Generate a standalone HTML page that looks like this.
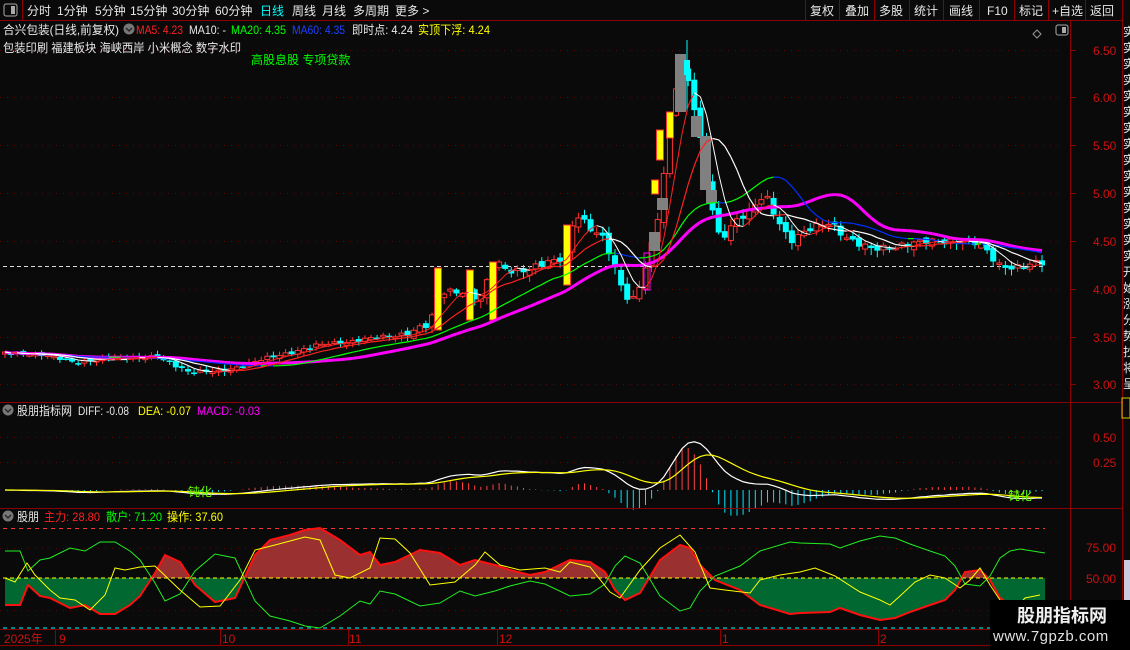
<!DOCTYPE html>
<html><head><meta charset="utf-8"><style>
html,body{margin:0;padding:0;background:#0a0a0a;width:1130px;height:650px;overflow:hidden;font-family:"Liberation Sans","Noto Sans CJK SC",sans-serif;}
svg text{font-family:"Liberation Sans","Noto Sans CJK SC",sans-serif;}
</style></head><body>
<svg id="s" width="1130" height="650" xmlns="http://www.w3.org/2000/svg">
<rect width="1130" height="650" fill="#0a0a0a"/>
<g id="grid"></g>
<g id="ind"></g>
<g id="macd"></g>
<g id="candles"></g>
<g id="ma"></g>
<line x1="0" y1="20.5" x2="1122" y2="20.5" stroke="#8b0000"/>
<line x1="0" y1="402.5" x2="1122" y2="402.5" stroke="#8b0000"/>
<line x1="0" y1="508.5" x2="1122" y2="508.5" stroke="#8b0000"/>
<line x1="0" y1="629.5" x2="1122" y2="629.5" stroke="#8b0000"/>
<line x1="0" y1="645.5" x2="1122" y2="645.5" stroke="#8b0000"/>
<line x1="1070.5" y1="20" x2="1070.5" y2="630" stroke="#8b0000"/>
<line x1="1122.5" y1="0" x2="1122.5" y2="650" stroke="#8b0000"/>
<line x1="22.5" y1="0" x2="22.5" y2="20" stroke="#8b0000"/>
<rect x="4" y="4" width="13" height="12" rx="2" fill="none" stroke="#aaa"/><rect x="11" y="6" width="4" height="8" fill="#aaa"/>
<g font-size="12" fill="#e8e8e8">
<text x="27" y="15">分时</text><text x="57" y="15">1分钟</text><text x="95" y="15">5分钟</text><text x="130" y="15">15分钟</text><text x="172" y="15">30分钟</text><text x="215" y="15">60分钟</text><text x="260" y="15" fill="#00ffff">日线</text><text x="292" y="15">周线</text><text x="322" y="15">月线</text><text x="353" y="15">多周期</text><text x="395" y="15">更多 &gt;</text>
<text x="810" y="15">复权</text><text x="845" y="15">叠加</text><text x="879" y="15">多股</text><text x="914" y="15">统计</text><text x="949" y="15">画线</text><text x="987" y="15">F10</text><text x="1019" y="15">标记</text><text x="1052" y="15">+自选</text><text x="1090" y="15">返回</text>
</g>
<g stroke="#8b0000"><line x1="805.5" y1="0" x2="805.5" y2="20"/><line x1="839.5" y1="0" x2="839.5" y2="20"/><line x1="874.5" y1="0" x2="874.5" y2="20"/><line x1="909.5" y1="0" x2="909.5" y2="20"/><line x1="943.5" y1="0" x2="943.5" y2="20"/><line x1="979.5" y1="0" x2="979.5" y2="20"/><line x1="1014.5" y1="0" x2="1014.5" y2="20"/><line x1="1048.5" y1="0" x2="1048.5" y2="20"/><line x1="1085.5" y1="0" x2="1085.5" y2="20"/></g>
<g font-size="12">
<text x="3" y="34" fill="#e8e8e8" textLength="116" lengthAdjust="spacingAndGlyphs">合兴包装(日线,前复权)</text>
<circle cx="129" cy="29" r="5.5" fill="#777"/><path d="M126 28l3 3 3-3" stroke="#222" fill="none" stroke-width="1.3"/>
<text x="136" y="34" fill="#ff2020" textLength="47" lengthAdjust="spacingAndGlyphs">MA5: 4.23</text>
<text x="189" y="34" fill="#e8e8e8" textLength="37" lengthAdjust="spacingAndGlyphs">MA10: -</text>
<text x="231" y="34" fill="#00ff00" textLength="55" lengthAdjust="spacingAndGlyphs">MA20: 4.35</text>
<text x="292" y="34" fill="#2040ff" textLength="53" lengthAdjust="spacingAndGlyphs">MA60: 4.35</text>
<text x="352" y="34" fill="#e8e8e8" textLength="61" lengthAdjust="spacingAndGlyphs">即时点: 4.24</text>
<text x="418" y="34" fill="#ffff00" textLength="72" lengthAdjust="spacingAndGlyphs">实顶下浮: 4.24</text>
<text x="3" y="52" fill="#e8e8e8" textLength="238" lengthAdjust="spacingAndGlyphs">包装印刷 福建板块 海峡西岸 小米概念 数字水印</text>
<text x="251" y="64" fill="#00ff00">高股息股 专项贷款</text>
<path d="M1037 30l-4 4 4 4 4-4z" fill="none" stroke="#999"/>
<rect x="1056" y="25" width="12" height="10" rx="2" fill="none" stroke="#aaa"/><rect x="1062" y="27" width="4" height="6" fill="#aaa"/>
</g>
<g font-size="12" fill="#cc1010">
<text x="1093" y="55">6.50</text><text x="1093" y="102">6.00</text><text x="1093" y="150">5.50</text><text x="1093" y="198">5.00</text><text x="1093" y="246">4.50</text><text x="1093" y="294">4.00</text><text x="1093" y="342">3.50</text><text x="1093" y="389">3.00</text>
<text x="1093" y="442">0.50</text><text x="1093" y="467">0.25</text>
<text x="1086" y="552">75.00</text><text x="1086" y="583">50.00</text>
</g>
<g font-size="12">
<circle cx="8" cy="410" r="5.5" fill="#777"/><path d="M5 409l3 3 3-3" stroke="#222" fill="none" stroke-width="1.3"/>
<text x="17" y="415" fill="#e8e8e8" textLength="55" lengthAdjust="spacingAndGlyphs">股朋指标网</text><text x="78" y="415" fill="#e8e8e8" textLength="51" lengthAdjust="spacingAndGlyphs">DIFF: -0.08</text><text x="138" y="415" fill="#ffff00" textLength="53" lengthAdjust="spacingAndGlyphs">DEA: -0.07</text><text x="197" y="415" fill="#ff00ff" textLength="63" lengthAdjust="spacingAndGlyphs">MACD: -0.03</text>
<circle cx="8" cy="516" r="5.5" fill="#777"/><path d="M5 515l3 3 3-3" stroke="#222" fill="none" stroke-width="1.3"/>
<text x="17" y="521" fill="#e8e8e8" textLength="22" lengthAdjust="spacingAndGlyphs">股朋</text><text x="44" y="521" fill="#ff2020" textLength="56" lengthAdjust="spacingAndGlyphs">主力: 28.80</text><text x="106" y="521" fill="#00ff00" textLength="56" lengthAdjust="spacingAndGlyphs">散户: 71.20</text><text x="167" y="521" fill="#ffff00" textLength="56" lengthAdjust="spacingAndGlyphs">操作: 37.60</text>
<text x="4" y="643" fill="#cc1010">2025年</text>
<g fill="#cc1010"><text x="59" y="643">9</text><text x="222" y="643">10</text><text x="349" y="643">11</text><text x="499" y="643">12</text><text x="722" y="643">1</text><text x="880" y="643">2</text></g>
</g>
<g stroke="#8b0000"><line x1="55.5" y1="630" x2="55.5" y2="645"/><line x1="220.5" y1="630" x2="220.5" y2="645"/><line x1="348.5" y1="630" x2="348.5" y2="645"/><line x1="497.5" y1="630" x2="497.5" y2="645"/><line x1="720.5" y1="630" x2="720.5" y2="645"/><line x1="878.5" y1="630" x2="878.5" y2="645"/></g>
<g id="rs" font-size="12" fill="#e8e8e8"></g>
<rect x="1122" y="398" width="8" height="20" fill="none" stroke="#cc0" /><rect x="1124" y="560" width="6" height="70" fill="#ccd"/>
<rect x="990" y="600" width="140" height="50" fill="#000"/>
<text x="1017" y="622" font-size="18" font-weight="bold" fill="#f0f0f0">股朋指标网</text>
<text x="993" y="641" font-size="15" fill="#e0e0e0" letter-spacing="0.5">www.7gpzb.com</text>
</svg>
<script>
(function(){
var NS="http://www.w3.org/2000/svg";
function el(p,t,a){var e=document.createElementNS(NS,t);for(var k in a)e.setAttribute(k,a[k]);p.appendChild(e);return e;}
var g=document.getElementById('grid');
[50,97,145,193,241,289,337,384].forEach(function(y){el(g,'line',{x1:0,y1:y+.5,x2:1064,y2:y+.5,stroke:'#6a0000','stroke-dasharray':'1 6'});el(g,'line',{x1:1070,y1:y+.5,x2:1076,y2:y+.5,stroke:'#8b0000'});});
[437,462].forEach(function(y){el(g,'line',{x1:0,y1:y+.5,x2:1064,y2:y+.5,stroke:'#6a0000','stroke-dasharray':'1 6'});});
[548,610].forEach(function(y){el(g,'line',{x1:0,y1:y+.5,x2:1045,y2:y+.5,stroke:'#6a0000','stroke-dasharray':'1 6'});});
el(g,'line',{x1:3,y1:266.5,x2:1045,y2:266.5,stroke:'#ddd','stroke-dasharray':'4 3'});
el(g,'line',{x1:3,y1:528.5,x2:1045,y2:528.5,stroke:'#ff3030','stroke-dasharray':'4 4'});
el(g,'line',{x1:3,y1:628,x2:1045,y2:628,stroke:'#00ffff','stroke-dasharray':'4 4'});
var rs=document.getElementById('rs');var chs="实实实实实实实实实实实实实实实开始涨分势抄将呈";
for(var i=0;i<23;i++){var tt=el(rs,'text',{x:1123,y:36+i*16});tt.textContent=chs[i];}
function interp(pts,x){for(var i=1;i<pts.length;i++){if(x<=pts[i][0]){var a=pts[i-1],b=pts[i];return a[1]+(b[1]-a[1])*(x-a[0])/(b[0]-a[0]);}}return pts[pts.length-1][1];}
var CP=[[5,352],[40,355],[80,362],[120,357],[160,358],[190,372],[220,372],[240,366],[280,355],[320,345],[360,340],[400,335],[430,325],[440,292],[460,290],[480,300],[495,262],[510,270],[530,270],[550,262],[565,256],[575,212],[590,230],[605,240],[615,268],[625,295],[635,300],[645,270],[655,235],[662,190],[670,118],[680,62],[690,85],[700,140],[710,200],[720,240],[735,220],[750,212],[765,195],[775,215],[790,240],[810,230],[830,222],[850,240],[870,250],[900,245],[930,242],[960,240],[980,245],[1000,265],[1020,268],[1040,263]];
var N=171,xs=[],cl=[],op=[];
for(var i=0;i<N;i++){var x=5+i*6.1;xs.push(x);var amp=x<400?1.5:3;cl.push(interp(CP,x)+Math.sin(i*2.3)*amp+Math.sin(i*0.7)*amp*0.5);}
var cg=document.getElementById('candles');
for(var i=0;i<N;i++){var amp=xs[i]<400?1.5:3;var o=i?cl[i-1]+Math.sin(i*1.7)*amp:cl[0]+2;op.push(o);var c=cl[i],x=xs[i];
var tp=Math.min(o,c),bt=Math.max(o,c);var hi=tp-1-Math.abs(Math.sin(i*3.1))*amp*2,lo=bt+1+Math.abs(Math.cos(i*2.7))*amp*2;
var up=c<o;var col=up?'#ff3030':'#00ffff';
el(cg,'line',{x1:x,y1:hi,x2:x,y2:lo,stroke:col});
var h=Math.max(bt-tp,1.5);
if(up)el(cg,'rect',{x:x-2.5,y:tp,width:5,height:h,fill:'#0a0a0a',stroke:col});else el(cg,'rect',{x:x-3,y:tp,width:6,height:h,fill:col});}
[[438,268,330,'y'],[470,270,320,'y'],[493,262,320,'y'],[567,225,285,'y'],[655,180,194,'y'],[660,130,160,'y'],[670,112,138,'y'],[654,232,251,'g'],[662,198,210,'g'],[680,54,112,'g'],[696,116,137,'g'],[705,136,190,'g'],[711,190,203,'g'],[647,253,290,'m']].forEach(function(s){
if(s[3]=='y')el(cg,'rect',{x:s[0]-3.5,y:s[1],width:7,height:s[2]-s[1],fill:'#ffff00',stroke:'#ff3030'});
else if(s[3]=='g')el(cg,'rect',{x:s[0]-5,y:s[1],width:11,height:s[2]-s[1],fill:'#808080'});
else el(cg,'rect',{x:s[0]-3,y:s[1],width:6,height:s[2]-s[1],fill:'none',stroke:'#ff00ff'});});
el(cg,'line',{x1:687,y1:40,x2:687,y2:112,stroke:'#00ffff'});el(cg,'rect',{x:684,y:60,width:6,height:15,fill:'#00ffff'});
var mg=document.getElementById('ma');
function ma(n){var r=[];for(var i=0;i<N;i++){var s=0,k=0;for(var j=Math.max(0,i-n+1);j<=i;j++){s+=cl[j];k++;}r.push(s/k);}return r;}
function drawMA(a,cu,cd,w){for(var i=1;i<N;i++){el(mg,'line',{x1:xs[i-1],y1:a[i-1],x2:xs[i],y2:a[i],stroke:a[i]<=a[i-1]?cu:cd,'stroke-width':w});}}
drawMA(ma(30),'#ff00ff','#ff00ff',3);
drawMA(ma(20),'#00ff00','#0030ff',1.2);
drawMA(ma(10),'#ff2020','#ffffff',1.2);
drawMA(ma(5),'#ff2020','#ffffff',1);
var mc=document.getElementById('macd');
var p=cl.map(function(y){return 6.5-(y-50)/96;});
var e12=p[0],e26=p[0],dea=0,D=[],E=[];
for(var i=0;i<N;i++){e12=e12+(p[i]-e12)*2/13;e26=e26+(p[i]-e26)*2/27;var d=e12-e26;dea=dea+(d-dea)*0.2;D.push(d);E.push(dea);}
for(var i=0;i<N;i++){var m=2*(D[i]-E[i]);el(mc,'line',{x1:xs[i],y1:490,x2:xs[i],y2:490-m*100,stroke:m>0?'#ff4040':'#00e5ff'});}
function pl(arr,col){var s='';for(var i=0;i<N;i++)s+=(i?'L':'M')+xs[i]+' '+(490-arr[i]*100);el(mc,'path',{d:s,stroke:col,fill:'none','stroke-width':1.2});}
pl(D,'#ffffff');pl(E,'#ffff00');
var t1=el(mc,'text',{x:188,y:496,'font-size':12,fill:'#66ff00'});t1.textContent='钝化';
var t2=el(mc,'text',{x:1008,y:500,'font-size':12,fill:'#66ff00'});t2.textContent='钝化';
var ig=document.getElementById('ind');
var R=[[5,605],[20,605],[28,585],[40,596],[50,598],[70,608],[85,605],[100,614],[115,614],[130,605],[140,596],[155,573],[165,555],[180,562],[195,585],[215,602],[235,598],[255,555],[270,540],[290,535],[305,530],[320,528],[340,540],[360,555],[370,552],[380,565],[395,562],[420,550],[440,553],[460,565],[475,560],[495,565],[510,570],[530,575],[545,572],[570,560],[590,562],[605,572],[615,590],[625,600],[640,593],[660,560],[680,545],[690,548],[700,565],[715,580],[740,590],[760,605],[790,614],[800,613],[830,612],[840,608],[860,615],[880,620],[895,618],[910,612],[930,605],[945,600],[955,590],[965,572],[980,570],[990,580],[1000,598],[1010,605],[1020,607],[1045,603]];
var Y=[[5,578],[15,582],[27,563],[35,575],[50,590],[60,598],[75,600],[90,610],[105,595],[115,568],[125,570],[140,567],[155,566],[180,590],[200,607],[220,606],[240,580],[255,550],[275,545],[305,537],[320,540],[335,575],[350,578],[370,568],[380,538],[395,539],[410,553],[430,585],[455,582],[475,565],[485,552],[500,565],[520,570],[545,568],[560,572],[570,562],[590,567],[610,592],[620,598],[640,570],[660,548],[680,535],[695,552],[710,588],[725,590],[750,593],[760,580],[780,575],[800,572],[815,568],[835,576],[860,592],[880,600],[890,605],[900,596],[915,582],[930,575],[945,578],[960,588],[970,580],[980,568],[990,585],[1000,600],[1010,615],[1025,598],[1040,595]];
var rp='M5 578';R.forEach(function(q){rp+='L'+q[0]+' '+q[1];});rp+='L1045 578Z';
var defs=el(ig,'defs',{});var c1=el(defs,'clipPath',{id:'ca'});el(c1,'rect',{x:0,y:500,width:1130,height:78});var c2=el(defs,'clipPath',{id:'cb'});el(c2,'rect',{x:0,y:578,width:1130,height:60});
el(ig,'path',{d:rp,fill:'#9a3030','clip-path':'url(#ca)'});el(ig,'path',{d:rp,fill:'#006830','clip-path':'url(#cb)'});
el(ig,'line',{x1:3,y1:578,x2:1045,y2:578,stroke:'#ffff00','stroke-dasharray':'4 3'});
function lp(pts,col,w,f){var s='';pts.forEach(function(q,i){s+=(i?'L':'M')+q[0]+' '+(f?f(q[1]):q[1]);});el(ig,'path',{d:s,stroke:col,fill:'none','stroke-width':w});}
lp(R,'#ff1010',2);lp(R,'#22ee22',1,function(v){return 1156-v;});lp(Y,'#ffff00',1);
})();
</script>
</body></html>
